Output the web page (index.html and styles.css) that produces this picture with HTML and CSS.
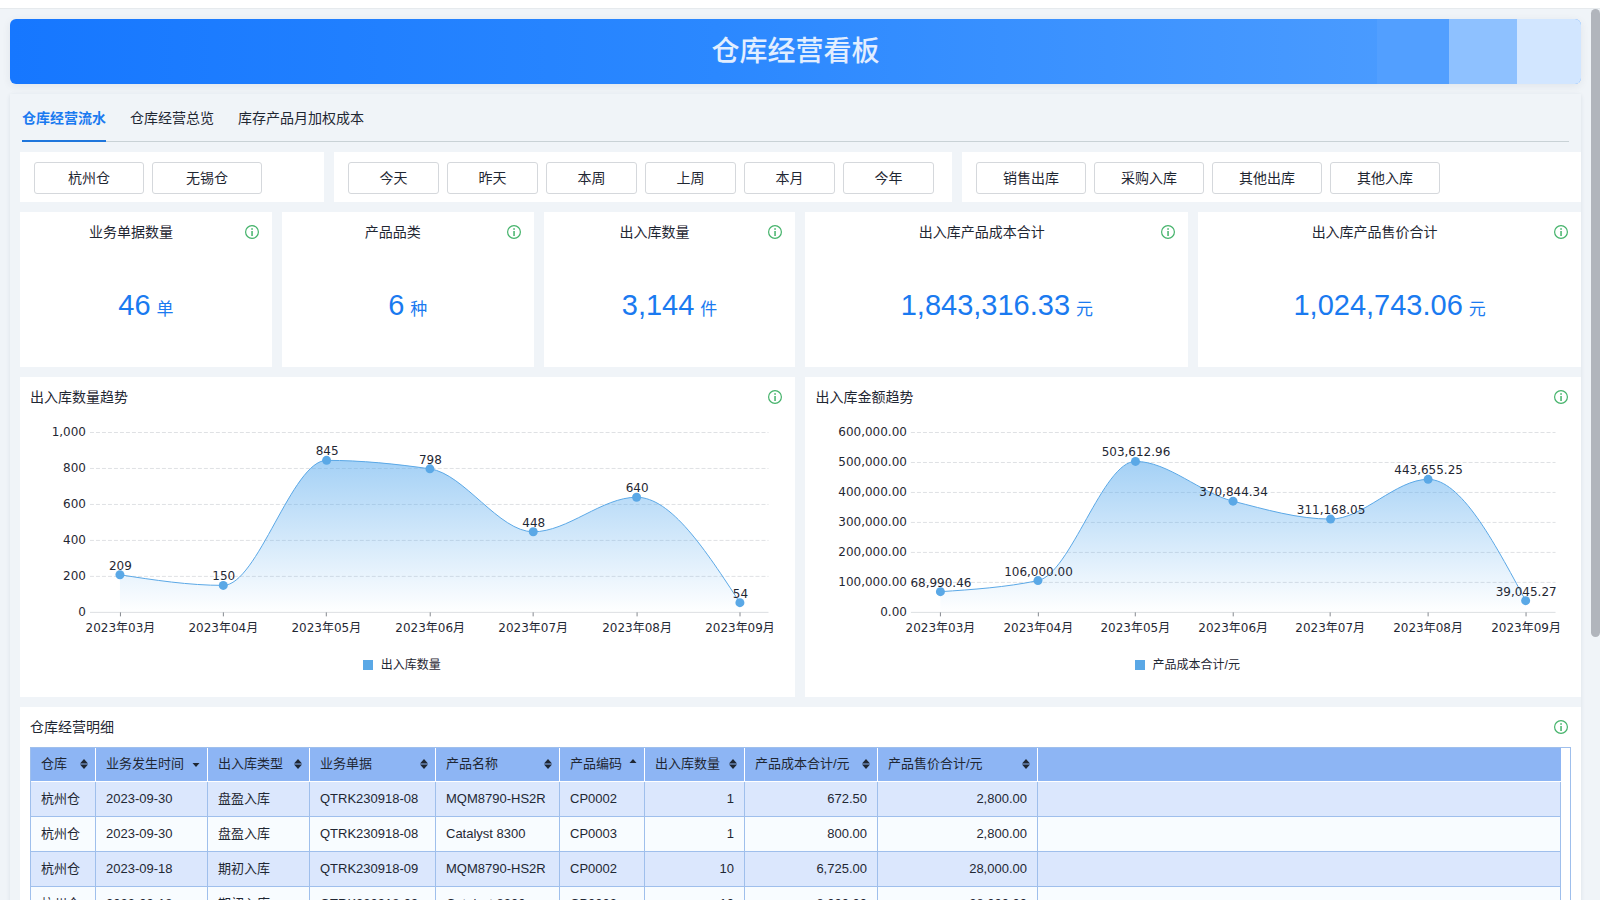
FILE: index.html
```html
<!DOCTYPE html>
<html lang="zh-CN">
<head>
<meta charset="utf-8">
<meta name="viewport" content="width=device-width, initial-scale=1">
<title>仓库经营看板</title>
<link rel="stylesheet" href="styles.css">
</head>
<body>
<svg class="sprite" aria-hidden="true">
  <symbol id="info" viewBox="0 0 14 14">
    <circle cx="7" cy="7" r="6.4" fill="none" stroke="currentColor" stroke-width="1.2"/>
    <rect x="6.3" y="3.2" width="1.5" height="1.6" fill="currentColor"/>
    <rect x="6.3" y="6" width="1.5" height="5" fill="currentColor"/>
  </symbol>
  <symbol id="sort-both" viewBox="0 0 8 10">
    <path d="M4 0 8 4.5H0zM4 10 8 5.5H0z" fill="currentColor"/>
  </symbol>
  <symbol id="sort-up" viewBox="0 0 8 10">
    <path d="M4 0 7.5 4H.5z" fill="currentColor"/>
  </symbol>
  <symbol id="sort-down" viewBox="0 0 8 10">
    <path d="M4 8 7.5 4H.5z" fill="currentColor"/>
  </symbol>
</svg>
<div class="topbar"></div>
<div class="page">
  <header class="banner">
    <h1 class="banner-title">仓库经营看板</h1>
    <div class="banner-bands"><span class="band band-a"></span><span class="band band-b"></span><span class="band band-c"></span></div>
  </header>
  <main class="panel">
    <div class="tabs" role="tablist">
      <button class="tab tab-active" role="tab" aria-selected="true">仓库经营流水</button>
      <button class="tab" role="tab" aria-selected="false">仓库经营总览</button>
      <button class="tab" role="tab" aria-selected="false">库存产品月加权成本</button>
    </div>
    <div class="filters">
      <div class="card filter">
        <button class="option">杭州仓</button>
        <button class="option">无锡仓</button>
      </div>
      <div class="card filter filter-dates">
        <button class="option">今天</button>
        <button class="option">昨天</button>
        <button class="option">本周</button>
        <button class="option">上周</button>
        <button class="option">本月</button>
        <button class="option">今年</button>
      </div>
      <div class="card filter">
        <button class="option">销售出库</button>
        <button class="option">采购入库</button>
        <button class="option">其他出库</button>
        <button class="option">其他入库</button>
      </div>
    </div>
    <div class="widgets">
      <section class="card stat">
        <div class="card-head"><h2 class="card-title">业务单据数量</h2><button class="info" aria-label="说明"><svg><use href="#info"/></svg></button></div>
        <p class="stat-value">46<span class="unit">单</span></p>
      </section>
      <section class="card stat">
        <div class="card-head"><h2 class="card-title">产品品类</h2><button class="info" aria-label="说明"><svg><use href="#info"/></svg></button></div>
        <p class="stat-value">6<span class="unit">种</span></p>
      </section>
      <section class="card stat">
        <div class="card-head"><h2 class="card-title">出入库数量</h2><button class="info" aria-label="说明"><svg><use href="#info"/></svg></button></div>
        <p class="stat-value">3,144<span class="unit">件</span></p>
      </section>
      <section class="card stat stat-wide">
        <div class="card-head"><h2 class="card-title">出入库产品成本合计</h2><button class="info" aria-label="说明"><svg><use href="#info"/></svg></button></div>
        <p class="stat-value">1,843,316.33<span class="unit">元</span></p>
      </section>
      <section class="card stat stat-wide">
        <div class="card-head"><h2 class="card-title">出入库产品售价合计</h2><button class="info" aria-label="说明"><svg><use href="#info"/></svg></button></div>
        <p class="stat-value">1,024,743.06<span class="unit">元</span></p>
      </section>

      <section class="card chart-card">
        <div class="card-head"><h2 class="card-title">出入库数量趋势</h2><button class="info" aria-label="说明"><svg><use href="#info"/></svg></button></div>
        <svg class="chart" id="chart-count" viewBox="0 0 776 224"></svg>
        <div class="legend"><span class="legend-mark"></span>出入库数量</div>
      </section>
      <section class="card chart-card">
        <div class="card-head"><h2 class="card-title">出入库金额趋势</h2><button class="info" aria-label="说明"><svg><use href="#info"/></svg></button></div>
        <svg class="chart" id="chart-amount" viewBox="0 0 776 224"></svg>
        <div class="legend"><span class="legend-mark"></span>产品成本合计/元</div>
      </section>

      <section class="card detail">
        <div class="card-head"><h2 class="card-title">仓库经营明细</h2><button class="info" aria-label="说明"><svg><use href="#info"/></svg></button></div>
        <div class="table-frame">
          <table class="table">
            <colgroup>
              <col class="c-store"><col class="c-date"><col class="c-type"><col class="c-bill"><col class="c-name"><col class="c-code"><col class="c-count"><col class="c-cost"><col class="c-price"><col>
            </colgroup>
            <thead>
              <tr>
                <th><button class="sort">仓库<svg><use href="#sort-both"/></svg></button></th>
                <th><button class="sort">业务发生时间<svg><use href="#sort-down"/></svg></button></th>
                <th><button class="sort">出入库类型<svg><use href="#sort-both"/></svg></button></th>
                <th><button class="sort">业务单据<svg><use href="#sort-both"/></svg></button></th>
                <th><button class="sort">产品名称<svg><use href="#sort-both"/></svg></button></th>
                <th><button class="sort">产品编码<svg><use href="#sort-up"/></svg></button></th>
                <th><button class="sort">出入库数量<svg><use href="#sort-both"/></svg></button></th>
                <th><button class="sort">产品成本合计/元<svg><use href="#sort-both"/></svg></button></th>
                <th><button class="sort">产品售价合计/元<svg><use href="#sort-both"/></svg></button></th>
                <th class="filler"></th>
              </tr>
            </thead>
            <tbody>
              <tr><td>杭州仓</td><td>2023-09-30</td><td>盘盈入库</td><td>QTRK230918-08</td><td>MQM8790-HS2R</td><td>CP0002</td><td class="num">1</td><td class="num">672.50</td><td class="num">2,800.00</td><td></td></tr>
              <tr><td>杭州仓</td><td>2023-09-30</td><td>盘盈入库</td><td>QTRK230918-08</td><td>Catalyst 8300</td><td>CP0003</td><td class="num">1</td><td class="num">800.00</td><td class="num">2,800.00</td><td></td></tr>
              <tr><td>杭州仓</td><td>2023-09-18</td><td>期初入库</td><td>QTRK230918-09</td><td>MQM8790-HS2R</td><td>CP0002</td><td class="num">10</td><td class="num">6,725.00</td><td class="num">28,000.00</td><td></td></tr>
              <tr><td>杭州仓</td><td>2023-09-18</td><td>期初入库</td><td>QTRK230918-09</td><td>Catalyst 8300</td><td>CP0003</td><td class="num">10</td><td class="num">8,000.00</td><td class="num">28,000.00</td><td></td></tr>
            </tbody>
          </table>
        </div>
      </section>
    </div>
  </main>
  <div class="scroll-thumb"></div>
</div>
<script src="charts.js"></script>
</body>
</html>
```

FILE: styles.css
```css
* {
  box-sizing: border-box;
}

body {
  margin: 0;
  height: 100vh;
  overflow: hidden;
  display: flex;
  flex-direction: column;
  background: #f0f4f8;
  color: #1f2733;
  font: 14px/20px "Liberation Sans", "Noto Sans CJK SC", sans-serif;
}

h1, h2, p {
  margin: 0;
  font-weight: 400;
}

button {
  margin: 0;
  padding: 0;
  border: 0;
  background: none;
  color: inherit;
  font: inherit;
  cursor: pointer;
}

.sprite {
  position: absolute;
  width: 0;
  height: 0;
}

.topbar {
  flex: none;
  height: 9px;
  background: #fff;
  border-bottom: 1px solid #e6eaed;
}

.page {
  position: relative;
  flex: 1;
  min-height: 0;
  overflow: hidden;
  padding: 10px 19px 0 10px;
}

.scroll-thumb {
  position: absolute;
  top: 0;
  right: 0;
  width: 9px;
  height: 628px;
  border-radius: 5px;
  background: #b1b5bc;
}

.banner {
  position: relative;
  height: 65px;
  display: flex;
  align-items: center;
  justify-content: center;
  overflow: hidden;
  border-radius: 6px;
  background: linear-gradient(90deg, #1677ff, #2b88ff 45%, #4a9bff 88%);
  box-shadow: 0 2px 8px rgba(40, 50, 80, 0.08);
}

.banner-title {
  color: #e2eeff;
  font-size: 28px;
  line-height: 40px;
  font-weight: 500;
}

.banner-bands {
  position: absolute;
  inset: 0 0 0 auto;
  display: flex;
}

.band-a {
  width: 72px;
  background: #529fff;
}

.band-b {
  width: 68px;
  background: #8ec1ff;
}

.band-c {
  width: 64px;
  background: #d2e6ff;
}

.panel {
  margin-top: 10px;
  padding-left: 10px;
  box-shadow: 0 1px 4px rgba(40, 60, 90, 0.1);
}

.tabs {
  display: flex;
  gap: 24px;
  margin: 0 12px 10px 2px;
  border-bottom: 1px solid #c9d2d6;
}

.tab {
  height: 48px;
  margin-bottom: -1px;
  padding-top: 2px;
  border-bottom: 2px solid transparent;
}

.tab-active {
  color: #1a7af0;
  border-bottom-color: #1f76dc;
  font-weight: 700;
}

.card {
  background: #fff;
}

.filters {
  display: grid;
  grid-template-columns: 304fr 618fr 619fr;
  gap: 10px;
  margin-bottom: 10px;
}

.filter {
  display: flex;
  gap: 8px;
  padding: 10px 14px 8px;
}

.option {
  width: 110px;
  height: 32px;
  border: 1px solid #d5d8dc;
  border-radius: 3px;
  background: #fff;
}

.filter-dates .option {
  width: 91px;
}

.widgets {
  display: grid;
  grid-template-columns: repeat(12, minmax(0, 1fr));
  gap: 10px;
}

.stat {
  grid-column: span 2;
  height: 155px;
  display: flex;
  flex-direction: column;
}

.stat-wide {
  grid-column: span 3;
}

.card-head {
  display: flex;
  align-items: center;
  gap: 3px;
  height: 40px;
  padding: 0 13px 0 10px;
}

.card-title {
  flex: 1;
  font-size: 14px;
  line-height: 20px;
}

.stat .card-head {
  padding-left: 0;
  text-align: center;
}

.info {
  width: 14px;
  height: 14px;
  color: #45b36b;
}

.info svg {
  display: block;
  width: 14px;
  height: 14px;
}

.stat-value {
  flex: 1;
  display: flex;
  align-items: baseline;
  justify-content: center;
  gap: 6px;
  padding-top: 33px;
  color: #1a7af0;
  font-size: 29px;
  line-height: 40px;
}

.unit {
  font-size: 17px;
}

.chart-card {
  grid-column: span 6;
  padding-bottom: 22px;
}

.chart {
  display: block;
  width: 100%;
  height: auto;
}

.chart text {
  font: 12px "DejaVu Sans", "Noto Sans CJK SC", sans-serif;
  fill: #1f2733;
}

.grid-line {
  stroke: #dfe1e4;
  stroke-dasharray: 4 2;
}

.axis-line {
  stroke: #dcdfe2;
}

.tick {
  stroke: #85898f;
}

.trend {
  fill: none;
  stroke: #5aa8e6;
}

.dot {
  fill: #5aa8e6;
}

.legend {
  display: flex;
  align-items: center;
  justify-content: center;
  gap: 8px;
  height: 34px;
  padding: 14px 12px 0 0;
  font-size: 12px;
}

.legend-mark {
  width: 10px;
  height: 10px;
  background: #5aa8e6;
}

.detail {
  grid-column: span 12;
  padding-bottom: 10px;
}

.table-frame {
  margin: 0 10px;
  padding-right: 9px;
  border: 1px solid #9fbfec;
}

.table {
  width: 100%;
  table-layout: fixed;
  border-collapse: separate;
  border-spacing: 0;
  font-size: 13px;
  line-height: 20px;
}

.c-store { width: 65px; }
.c-date { width: 112px; }
.c-type { width: 102px; }
.c-bill { width: 126px; }
.c-name { width: 124px; }
.c-code { width: 85px; }
.c-count { width: 100px; }
.c-cost { width: 133px; }
.c-price { width: 160px; }

.table th {
  height: 34px;
  padding: 0 7px 0 10px;
  border: solid #fff;
  border-width: 0 1px 1px 0;
  background: #8db5f4;
  font-weight: 400;
}

.table .filler {
  border-right: 0;
}

.sort {
  width: 100%;
  display: flex;
  align-items: center;
  justify-content: space-between;
  white-space: nowrap;
}

.sort svg {
  width: 8px;
  height: 10px;
}

.table td {
  height: 35px;
  padding: 0 10px;
  border: solid #9fbfec;
  border-width: 0 1px 1px 0;
  background: #f8fcff;
  white-space: nowrap;
}

.table tbody tr:nth-child(odd) td {
  background: #dbe7fd;
}

.table .num {
  text-align: right;
}
```

FILE: charts.js
```js
const SVG_NS = 'http://www.w3.org/2000/svg';
const MONTHS = ['03', '04', '05', '06', '07', '08', '09'].map((m) => `2023年${m}月`);
const TOP = 15.5;
const BOTTOM = 195.5;

function add(parent, tag, attrs, text) {
  const node = document.createElementNS(SVG_NS, tag);
  for (const key in attrs) node.setAttribute(key, attrs[key]);
  if (text !== undefined) node.textContent = text;
  parent.appendChild(node);
  return node;
}

// Monotone cubic curve: flat at every peak and valley, never overshooting a value.
function smoothPath(points) {
  const n = points.length;
  const secants = [];
  for (let i = 0; i < n - 1; i++) {
    secants.push((points[i + 1].y - points[i].y) / (points[i + 1].x - points[i].x));
  }
  const slopes = points.map((p, i) => {
    const a = secants[i - 1];
    const b = secants[i];
    if (a === undefined || b === undefined || a * b <= 0) return 0;
    return 2 * a * b / (a + b);
  });
  slopes[0] = (3 * secants[0] - slopes[1]) / 2;
  slopes[n - 1] = (3 * secants[n - 2] - slopes[n - 2]) / 2;

  let d = `M${points[0].x} ${points[0].y}`;
  for (let i = 1; i < n; i++) {
    const a = points[i - 1];
    const b = points[i];
    const h = (b.x - a.x) / 3;
    d += `C${a.x + h} ${a.y + h * slopes[i - 1]} ${b.x - h} ${b.y - h * slopes[i]} ${b.x} ${b.y}`;
  }
  return d;
}

function drawChart(id, o) {
  const svg = document.getElementById(id);
  const format = (v) => v.toLocaleString('en-US', {
    minimumFractionDigits: o.decimals,
    maximumFractionDigits: o.decimals
  });
  const toY = (v) => BOTTOM - (BOTTOM - TOP) * v / o.max;

  for (let v = 0; v <= o.max; v += o.step) {
    const y = toY(v);
    add(svg, 'line', { class: v ? 'grid-line' : 'axis-line', x1: o.left, x2: o.right, y1: y, y2: y });
    add(svg, 'text', { x: o.left - 4, y: y + 3.5, 'text-anchor': 'end' }, format(v));
  }

  const points = o.values.map((v, i) => ({ x: o.first + o.gap * i, y: toY(v) }));
  const path = smoothPath(points);
  const gradient = add(add(svg, 'defs', {}), 'linearGradient', { id: id + '-fill', x1: 0, y1: 0, x2: 0, y2: 1 });
  add(gradient, 'stop', { offset: 0, 'stop-color': '#5aabee', 'stop-opacity': 0.55 });
  add(gradient, 'stop', { offset: 1, 'stop-color': '#5aabee', 'stop-opacity': 0 });
  const last = points[points.length - 1];
  add(svg, 'path', { d: `${path}L${last.x} ${BOTTOM}L${points[0].x} ${BOTTOM}Z`, fill: `url(#${id}-fill)` });
  add(svg, 'path', { class: 'trend', d: path });

  points.forEach((p, i) => {
    const x = Math.floor(p.x) + 0.5;
    add(svg, 'line', { class: 'tick', x1: x, x2: x, y1: BOTTOM, y2: BOTTOM + 4 });
    add(svg, 'circle', { class: 'dot', cx: p.x, cy: p.y, r: 4.5 });
    add(svg, 'text', { x: p.x + 0.5, y: p.y - 5, 'text-anchor': 'middle' }, format(o.values[i]));
    add(svg, 'text', { x: x, y: BOTTOM + 20, 'text-anchor': 'middle' }, MONTHS[i]);
  });
}

drawChart('chart-count', {
  values: [209, 150, 845, 798, 448, 640, 54],
  max: 1000, step: 200, decimals: 0, left: 70, right: 749, first: 100, gap: 103.4
});

drawChart('chart-amount', {
  values: [68990.46, 106000, 503612.96, 370844.34, 311168.05, 443655.25, 39045.27],
  max: 600000, step: 100000, decimals: 2, left: 106, right: 751, first: 135.5, gap: 97.6
});
```
